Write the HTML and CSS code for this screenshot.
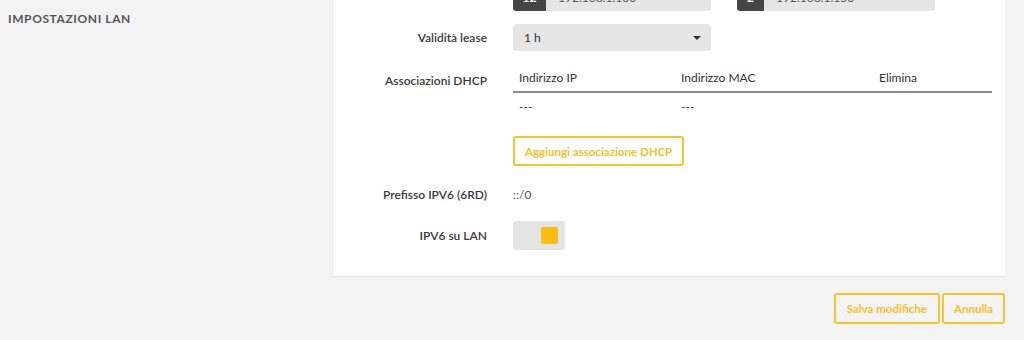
FILE: index.html
```html
<!DOCTYPE html>
<html lang="it">
  <head>
    <meta charset="UTF-8" />
    <title>Impostazioni LAN</title>
    <link rel="stylesheet" href="styles.css">
  </head>
  <body>
    <div class="page">
      <div class="side">
        <h3 class="side-title">IMPOSTAZIONI LAN</h3>
      </div>
      <div class="main">
        <div class="panel">
          <div class="row row-range">
            <label class="lbl">Intervallo indirizzi</label>
            <div class="ctrl range">
              <div class="ingroup">
                <span class="prefix wide">12</span>
                <span class="infield">192.168.1.100</span>
              </div>
              <div class="ingroup">
                <span class="prefix">2</span>
                <span class="infield">192.168.1.150</span>
              </div>
            </div>
          </div>

          <div class="row">
            <label class="lbl">Validità lease</label>
            <div class="ctrl">
              <div class="select">
                <span>1 h</span>
                <span class="caret"></span>
              </div>
            </div>
          </div>

          <div class="row row-top">
            <label class="lbl lbl-table">Associazioni DHCP</label>
            <div class="ctrl ctrl-wide">
              <table class="dhcp">
                <thead>
                  <tr>
                    <th class="c-ip">Indirizzo IP</th>
                    <th class="c-mac">Indirizzo MAC</th>
                    <th>Elimina</th>
                  </tr>
                </thead>
                <tbody>
                  <tr>
                    <td>---</td>
                    <td>---</td>
                    <td></td>
                  </tr>
                </tbody>
              </table>
              <button class="btn btn-add" type="button">Aggiungi associazione DHCP</button>
            </div>
          </div>

          <div class="row row-prefix">
            <label class="lbl">Prefisso IPV6 (6RD)</label>
            <div class="ctrl value">::/0</div>
          </div>

          <div class="row row-toggle">
            <label class="lbl">IPV6 su LAN</label>
            <div class="ctrl">
              <div class="toggle"><span class="knob"></span></div>
            </div>
          </div>
        </div>

        <div class="actions">
          <button class="btn btn-save" type="button">Salva modifiche</button>
          <button class="btn" type="button">Annulla</button>
        </div>
      </div>
    </div>
  </body>
</html>
```

FILE: styles.css
```css
body{
    margin: 0;
    padding: 0;
    background-color: #f3f3f3;
    font-family: 'Lato', 'Noto Sans', sans-serif;
    color: #333;
    overflow: hidden;
}
.page{
    display: flex;
    height: 340px;
}
.side{
    width: 333px;
    flex-shrink: 0;
}
.side-title{
    margin: 11px 0 0 8px;
    font-size: 12px;
    font-weight: 700;
    letter-spacing: 0.6px;
    color: #555;
}
.main{
    width: 672px;
}
.panel{
    background-color: #fff;
    margin-top: -16px;
    padding: 0 13px 26px 0;
    box-shadow: 0 1px 1px rgba(0, 0, 0, 0.07);
}
.row{
    display: flex;
    align-items: center;
    column-gap: 26px;
    margin-bottom: 13px;
}
.row-top{
    align-items: flex-start;
}
.lbl{
    width: 154px;
    flex-shrink: 0;
    text-align: right;
    font-size: 12px;
    font-weight: 600;
    color: #3a3a3a;
}
.lbl-table{
    padding-top: 9px;
}
.row-range{
    align-items: flex-start;
}
.row-range .lbl{
    margin-top: -12px;
}
.range{
    display: flex;
    gap: 26px;
}
.ingroup{
    display: flex;
    width: 198px;
    height: 27px;
    border-radius: 3px;
    overflow: hidden;
    background-color: #e6e6e6;
}
.prefix{
    width: 27px;
    background-color: #454545;
    color: #fff;
    font-size: 12px;
    font-weight: 700;
    display: flex;
    align-items: center;
    justify-content: center;
}
.prefix.wide{
    width: 33px;
}
.infield{
    padding-left: 12px;
    display: flex;
    align-items: center;
    font-size: 12px;
    color: #555;
}
.select{
    width: 198px;
    height: 27px;
    box-sizing: border-box;
    background-color: #e6e6e6;
    border-radius: 3px;
    padding: 0 10px 0 11px;
    display: flex;
    align-items: center;
    justify-content: space-between;
    font-size: 12px;
    color: #333;
}
.caret{
    width: 0;
    height: 0;
    border-left: 4px solid transparent;
    border-right: 4px solid transparent;
    border-top: 4px solid #333;
}
.ctrl-wide{
    flex: 1;
}
.dhcp{
    width: 479px;
    table-layout: fixed;
    border-collapse: collapse;
    font-size: 12px;
}
.dhcp th{
    text-align: left;
    font-weight: 400;
    color: #333;
    padding: 6px 6px 6px;
    border-bottom: 2px solid #8a8a8a;
}
.c-ip{
    width: 150px;
}
.c-mac{
    width: 186px;
}
.dhcp td{
    padding: 5px 6px;
    color: #444;
    height: 16px;
}
.btn{
    font-family: inherit;
    font-size: 11.5px;
    font-weight: 700;
    color: #f2c12e;
    background-color: transparent;
    border: 2px solid #f5c431;
    border-radius: 3px;
    padding: 0 10px;
    height: 31px;
    cursor: pointer;
}
.btn-save{
    padding: 0 11px;
}
.btn-add{
    margin-top: 17px;
    height: 30px;
    background-color: #fff;
}
.row-prefix{
    margin-top: 21px;
    margin-bottom: 19px;
}
.value{
    font-size: 12px;
    color: #555;
}
.row-toggle{
    margin-bottom: 0;
}
.toggle{
    width: 52px;
    height: 29px;
    background-color: #e4e4e4;
    border-radius: 3px;
    display: flex;
    align-items: center;
    justify-content: flex-end;
    padding-right: 7px;
    box-sizing: border-box;
}
.knob{
    width: 17px;
    height: 17px;
    border-radius: 2px;
    background-color: #fbbd12;
}
.actions{
    display: flex;
    justify-content: flex-end;
    gap: 2px;
    margin-top: 17px;
}
```
